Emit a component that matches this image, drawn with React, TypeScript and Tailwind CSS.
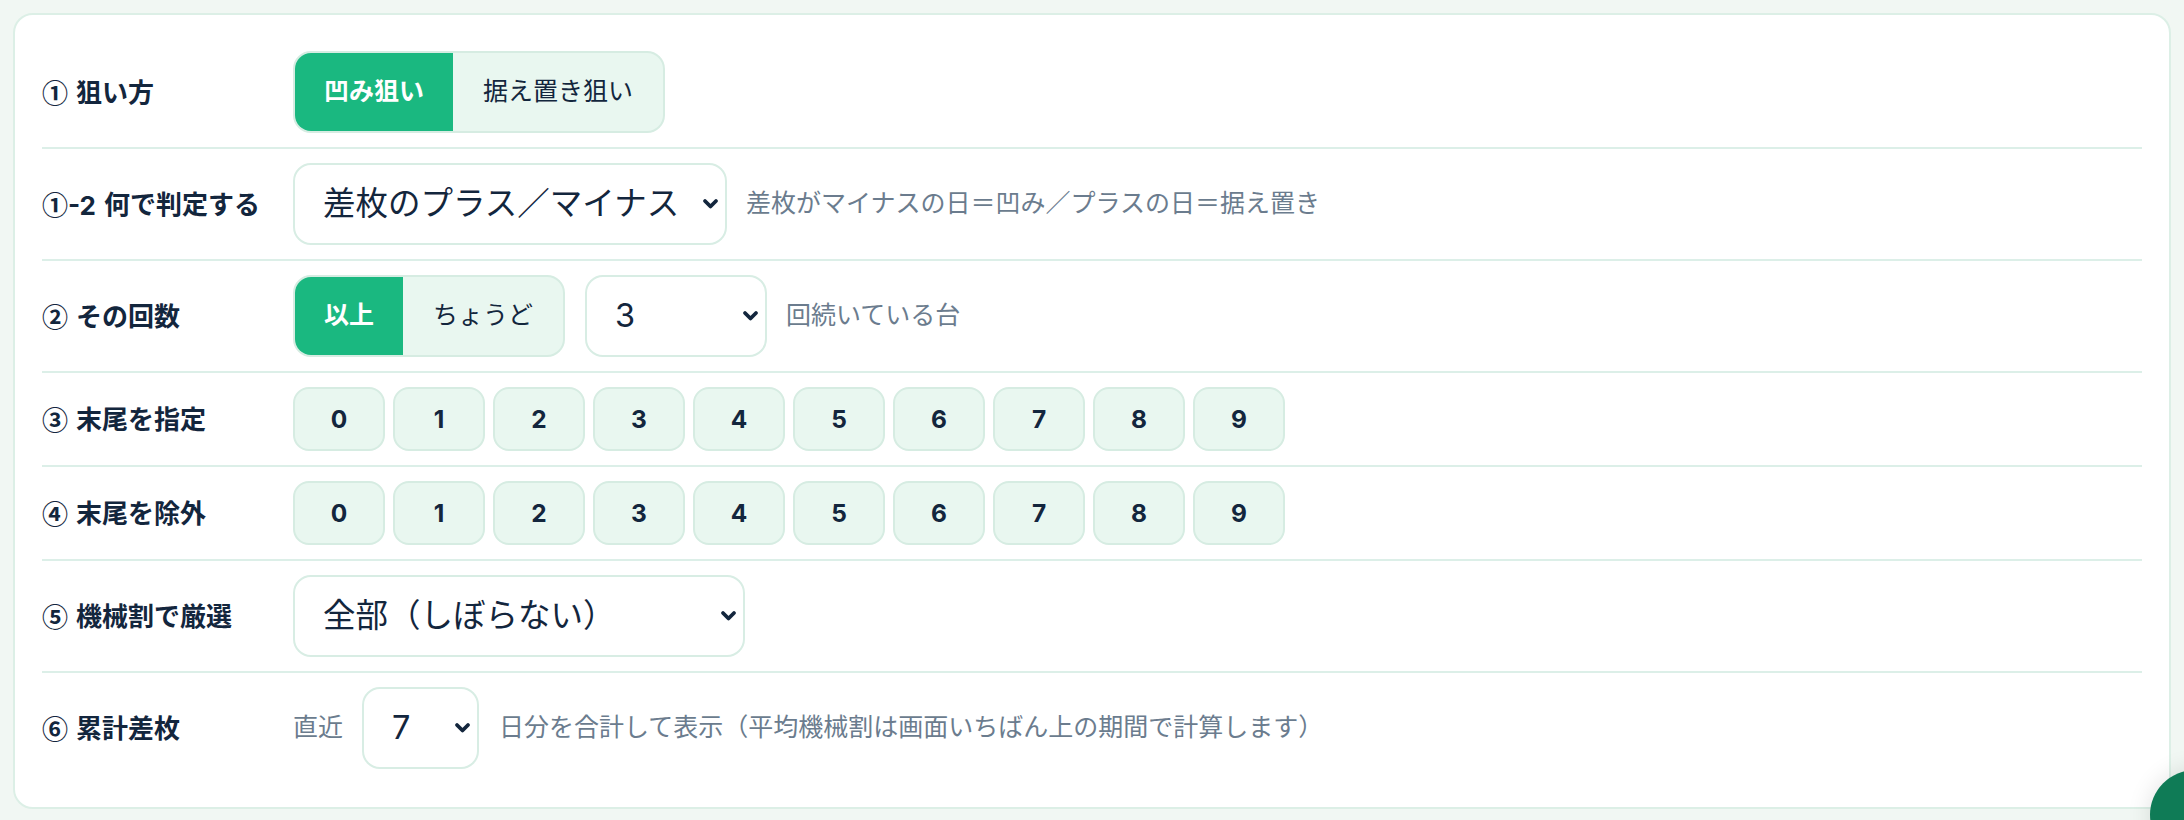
import { useState } from 'react';

const DIGITS = ['0', '1', '2', '3', '4', '5', '6', '7', '8', '9'];

function Chevron() {
  return (
    <svg
      viewBox="0 0 16 12"
      className="pointer-events-none absolute right-[8px] top-1/2 h-[12px] w-[17px] -translate-y-1/2"
      fill="none"
      stroke="#13263d"
      strokeWidth={3.8}
      strokeLinecap="round"
      strokeLinejoin="round"
    >
      <path d="M2.5 3 8 8.5 13.5 3" />
    </svg>
  );
}

function Select({ value, options, width, onChange }: { value: string; options: string[]; width: string; onChange: (v: string) => void }) {
  return (
    <div className={`relative shrink-0 ${width}`}>
      <select
        value={value}
        onChange={(e) => onChange(e.target.value)}
        className="h-[82px] w-full appearance-none rounded-[18px] border-2 border-[#d8ede4] bg-white pl-[28px] pr-[36px] text-[32.5px] text-[#13263d] outline-none"
      >
        {options.map((o) => (
          <option key={o} value={o}>{o}</option>
        ))}
      </select>
      <Chevron />
    </div>
  );
}

function Segment({ options, value, onChange }: { options: string[]; value: string; onChange: (v: string) => void }) {
  return (
    <div className="flex h-[82px] shrink-0 overflow-hidden rounded-[18px] border-2 border-[#d6ece2] bg-[#e9f7f0]">
      {options.map((o) => (
        <button
          key={o}
          onClick={() => onChange(o)}
          className={
            o === value
              ? 'bg-[#1ab880] px-[29px] text-[25px] font-bold text-white'
              : 'px-[30px] text-[25px] text-[#13263d]'
          }
        >
          {o}
        </button>
      ))}
    </div>
  );
}

function DigitPicker({ selected, onToggle }: { selected: string[]; onToggle: (d: string) => void }) {
  return (
    <div className="flex gap-[8px]">
      {DIGITS.map((d) => (
        <button
          key={d}
          onClick={() => onToggle(d)}
          className={
            selected.includes(d)
              ? 'h-[64px] w-[92px] rounded-[16px] border-2 border-[#1ab880] bg-[#1ab880] text-[24.5px] font-bold text-white'
              : 'h-[64px] w-[92px] rounded-[16px] border-2 border-[#d6ece2] bg-[#e9f7f0] text-[24.5px] font-bold text-[#13263d]'
          }
        >
          {d}
        </button>
      ))}
    </div>
  );
}

function Row({ num, sub, label, last, children }: { num: string; sub?: string; label: string; last?: boolean; children: React.ReactNode }) {
  return (
    <div className={last ? 'flex items-center py-[14px]' : 'flex items-center border-b-2 border-[#dcefe8] py-[14px]'}>
      <div className="flex w-[251px] shrink-0 items-center gap-[8px] text-[26px] font-bold text-[#13263d]">
        <span>
          <span className="font-['Noto_Sans_CJK_JP',sans-serif]">{num}</span>
          {sub}
        </span>
        <span>{label}</span>
      </div>
      <div className="flex items-center">{children}</div>
    </div>
  );
}

function Hint({ children }: { children: React.ReactNode }) {
  return <span className="text-[25px] text-[#6b7c8e]">{children}</span>;
}

export default function App() {
  const [aim, setAim] = useState('凹み狙い');
  const [judge, setJudge] = useState('差枚のプラス／マイナス');
  const [mode, setMode] = useState('以上');
  const [count, setCount] = useState('3');
  const [include, setInclude] = useState<string[]>([]);
  const [exclude, setExclude] = useState<string[]>([]);
  const [rate, setRate] = useState('全部（しぼらない）');
  const [days, setDays] = useState('7');

  const toggle = (list: string[], set: (v: string[]) => void) => (d: string) =>
    set(list.includes(d) ? list.filter((x) => x !== d) : [...list, d]);

  return (
    <div className="min-h-screen bg-[#f1f7f3] p-[13px] font-['Inter','Noto_Sans_CJK_JP',sans-serif]">
      <div className="rounded-[20px] border-2 border-[#dcefe6] bg-white px-[27px] pb-[24px] pt-[22px]">
        <Row num="①" label="狙い方">
          <Segment options={['凹み狙い', '据え置き狙い']} value={aim} onChange={setAim} />
        </Row>

        <Row num="①" sub="-2" label="何で判定する">
          <Select
            value={judge}
            onChange={setJudge}
            width="w-[434px]"
            options={['差枚のプラス／マイナス', '機械割']}
          />
          <div className="ml-[19px]">
            <Hint>差枚がマイナスの日＝凹み／プラスの日＝据え置き</Hint>
          </div>
        </Row>

        <Row num="②" label="その回数">
          <Segment options={['以上', 'ちょうど']} value={mode} onChange={setMode} />
          <div className="ml-[20px]">
            <Select value={count} onChange={setCount} width="w-[182px]" options={['1', '2', '3', '4', '5', '6', '7']} />
          </div>
          <div className="ml-[19px]">
            <Hint>回続いている台</Hint>
          </div>
        </Row>

        <Row num="③" label="末尾を指定">
          <DigitPicker selected={include} onToggle={toggle(include, setInclude)} />
        </Row>

        <Row num="④" label="末尾を除外">
          <DigitPicker selected={exclude} onToggle={toggle(exclude, setExclude)} />
        </Row>

        <Row num="⑤" label="機械割で厳選">
          <Select
            value={rate}
            onChange={setRate}
            width="w-[452px]"
            options={['全部（しぼらない）', '100%以上', '105%以上']}
          />
        </Row>

        <Row num="⑥" label="累計差枚" last>
          <Hint>直近</Hint>
          <div className="ml-[19px]">
            <Select value={days} onChange={setDays} width="w-[117px]" options={['3', '5', '7', '14', '30']} />
          </div>
          <div className="ml-[20px]">
            <Hint>日分を合計して表示（平均機械割は画面いちばん上の期間で計算します）</Hint>
          </div>
        </Row>
      </div>

      <button
        aria-label="menu"
        className="fixed bottom-[-40px] right-[-56px] h-[90px] w-[90px] rounded-full bg-[#0f7b56] shadow-[0_0_24px_rgba(0,0,0,0.12)]"
      />
    </div>
  );
}
